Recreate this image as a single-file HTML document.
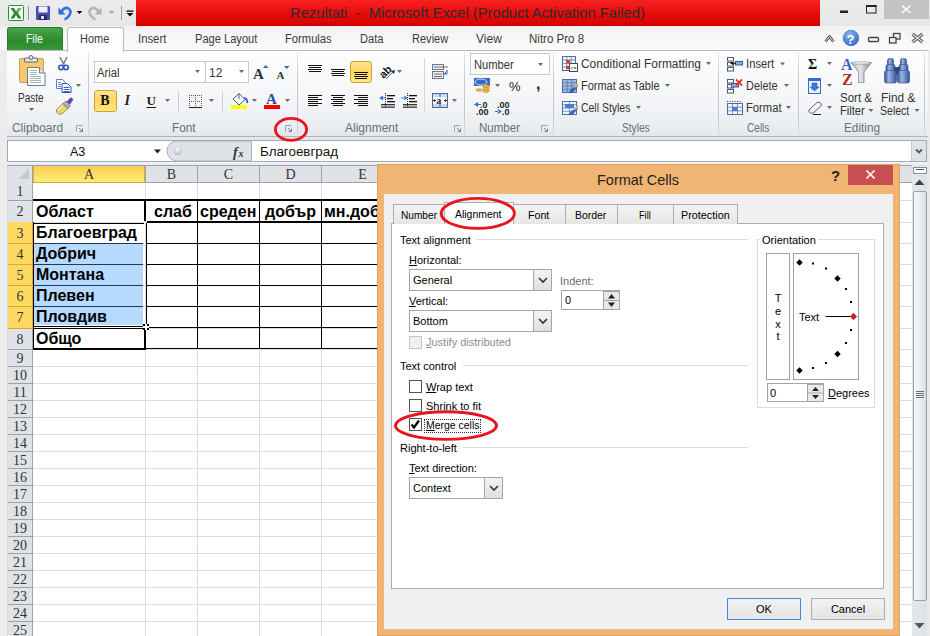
<!DOCTYPE html><html><head><meta charset="utf-8"><style>
*{margin:0;padding:0;box-sizing:border-box}
html,body{width:930px;height:636px;overflow:hidden}
body{position:relative;background:#ececec;font-family:"Liberation Sans",sans-serif;font-size:12px;color:#000}
.a{position:absolute}
.t{position:absolute;white-space:nowrap;line-height:1}
svg{position:absolute;overflow:visible}
.tab{position:absolute;top:33px;color:#3b3b3b;font-size:12px;white-space:nowrap;line-height:1}
.sep{position:absolute;top:52px;width:1px;height:83px;background:linear-gradient(#e6e9ed,#c5cad0 30%,#c5cad0 80%,#d8dce1)}
.glab{position:absolute;top:122px;color:#66707c;font-size:12px;white-space:nowrap;line-height:1}
.rl{position:absolute;color:#333;font-size:12px;white-space:nowrap;line-height:1}
.hdr{position:absolute;font-family:"Liberation Serif",serif;font-size:14px;color:#333;text-align:center;line-height:1}
.cell{position:absolute;font-weight:bold;font-size:16px;white-space:nowrap;line-height:1}
.dl{position:absolute;font-size:11px;color:#000;white-space:nowrap;line-height:1}
.cb{position:absolute;width:13px;height:13px;border:1px solid #555;background:#fff}
.combo{position:absolute;background:#fff;border:1px solid #a5a5a5}
.combo .btn{position:absolute;right:0;top:0;bottom:0;width:18px;background:linear-gradient(#f2f2f2,#e0e0e0);border-left:1px solid #a5a5a5}
</style></head><body>
<div class="a" style="left:0;top:0;width:930px;height:26px;background:linear-gradient(#ececec,#e6e6e6)"></div>
<div class="a" style="left:136px;top:0;width:684px;height:26px;background:linear-gradient(#f82222,#e80c0c 50%,#d60000)"></div>
<div class="t" style="left:290px;top:6px;font-size:14.8px;color:#2e2a2a;transform:scaleX(0.9968);transform-origin:0 0;">Rezultati &nbsp;- &nbsp;Microsoft Excel (Product Activation Failed)</div>
<div class="a" style="left:884px;top:0;width:45px;height:19px;background:#c3c3c3"></div>
<div class="a" style="left:0;top:26px;width:930px;height:24px;background:linear-gradient(#f1f1f1,#f8f8f8 60%,#fbfbfb)"></div>
<div class="a" style="left:7px;top:27px;width:56px;height:24px;background:linear-gradient(#47a447,#2b8a2b 60%,#3a9a3a);border:1px solid #2c7a2c;border-bottom:none;border-radius:3px 3px 0 0"></div>
<div class="t" style="left:26px;top:33px;font-size:12px;color:#fff;transform:scaleX(0.8637);transform-origin:0 0;">File</div>
<div class="a" style="left:67px;top:27px;width:57px;height:25px;background:linear-gradient(#ffffff,#fdfdfd);border:1px solid #b6bac0;border-bottom:none;border-radius:3px 3px 0 0;z-index:2"></div>
<div class="t" style="left:80px;top:33px;font-size:12px;color:#3b3b3b;z-index:3;transform:scaleX(0.9154);transform-origin:0 0;">Home</div>
<div class="t" style="left:138px;top:33px;font-size:12px;color:#3b3b3b;transform:scaleX(0.9429);transform-origin:0 0;">Insert</div>
<div class="t" style="left:195px;top:33px;font-size:12px;color:#3b3b3b;transform:scaleX(0.9245);transform-origin:0 0;">Page Layout</div>
<div class="t" style="left:285px;top:33px;font-size:12px;color:#3b3b3b;transform:scaleX(0.9338);transform-origin:0 0;">Formulas</div>
<div class="t" style="left:360px;top:33px;font-size:12px;color:#3b3b3b;transform:scaleX(0.9232);transform-origin:0 0;">Data</div>
<div class="t" style="left:412px;top:33px;font-size:12px;color:#3b3b3b;transform:scaleX(0.9201);transform-origin:0 0;">Review</div>
<div class="t" style="left:476px;top:33px;font-size:12px;color:#3b3b3b;transform:scaleX(1.0003);transform-origin:0 0;">View</div>
<div class="t" style="left:529px;top:33px;font-size:12px;color:#3b3b3b;transform:scaleX(0.9607);transform-origin:0 0;">Nitro Pro 8</div>
<svg style="left:0;top:0;z-index:5" width="930" height="50"><defs><radialGradient id="helpg" cx="0.4" cy="0.3" r="0.8"><stop offset="0" stop-color="#8ab8f0"/><stop offset="1" stop-color="#2a62c0"/></radialGradient></defs><rect x="8.5" y="5.5" width="15" height="15" rx="1" fill="#f4faf4" stroke="#2e8b3a"/><path d="M10.5 8 H14 L16 11.5 L18 8 H21.5 L18 13 L21.5 18.5 H18 L16 15 L14 18.5 H10.5 L14 13 Z" fill="#2a8a3a"/><path d="M16 11.5 L18 8 H21.5 L18 13 Z" fill="#6cc070"/><line x1="28.5" y1="6" x2="28.5" y2="20" stroke="#9a9a9a"/><rect x="36" y="6" width="14" height="14" rx="1" fill="#4c4cb8"/><rect x="38.5" y="6.5" width="9" height="6" fill="#f0f0ff"/><rect x="39" y="15" width="8" height="5" fill="#2a2a5a"/><rect x="41" y="16" width="3" height="3" fill="#dde"/><polygon points="58.5,7.5 58.5,14.5 65.5,14.5" fill="#2f6ad8"/><path d="M61.5 11.5 Q65 6.5 68.5 8.5 Q72 11 69.5 15 Q68 17.5 65.5 19" fill="none" stroke="#3274e0" stroke-width="2.6" stroke-linecap="round"/><polygon points="76.5,11 82.5,11 79.5,14" fill="#111"/><polygon points="101.5,7.5 101.5,14.5 94.5,14.5" fill="#b0b0b0"/><path d="M98.5 11.5 Q95 6.5 91.5 8.5 Q88 11 90.5 15 Q92 17.5 94.5 19" fill="none" stroke="#b4b4b4" stroke-width="2.6" stroke-linecap="round"/><polygon points="108.5,11 114.5,11 111.5,14" fill="#a8a8a8"/><line x1="121.5" y1="6" x2="121.5" y2="20" stroke="#9a9a9a"/><rect x="126.5" y="10.5" width="7" height="1.3" fill="#111"/><polygon points="126.5,13 133.5,13 130,16.5" fill="#111"/><rect x="840" y="10.5" width="8" height="2.5" fill="#222"/><rect x="866.5" y="5.5" width="9.5" height="7.5" fill="none" stroke="#222"/><rect x="866" y="5" width="10.5" height="2" fill="#222"/><path d="M902 5.5 L910.5 13 M910.5 5.5 L902 13" stroke="#fff" stroke-width="1.6"/><path d="M825.5 41.5 L829.5 36.5 L833.5 41.5" fill="none" stroke="#444" stroke-width="2.8" stroke-linejoin="round"/><path d="M825.5 41.5 L829.5 36.5 L833.5 41.5" fill="none" stroke="#fff" stroke-width="1" stroke-linejoin="round"/><circle cx="851" cy="38" r="7.8" fill="url(#helpg)" stroke="#3a6ab8" stroke-width="0.6"/><text x="846.6" y="43.5" font-family="Liberation Sans" font-weight="bold" font-size="13" fill="#fff">?</text><rect x="868.5" y="37.5" width="10" height="4" rx="1" fill="none" stroke="#444" stroke-width="1.3"/><rect x="893.5" y="33.5" width="6.5" height="5.5" fill="none" stroke="#444" stroke-width="1.3"/><rect x="889.5" y="37.5" width="6.5" height="5.5" fill="#f2f2f2" stroke="#444" stroke-width="1.3"/><path d="M912.5 34 L922.5 42 M922.5 34 L912.5 42" stroke="#444" stroke-width="3.2"/><path d="M912.5 34 L922.5 42 M922.5 34 L912.5 42" stroke="#f2f2f2" stroke-width="1.2"/></svg>
<div class="a" style="left:7px;top:50px;width:921px;height:87px;background:linear-gradient(#fdfdfe 0%,#f6f7f9 50%,#eceff2 85%,#e4e7eb 100%);border-top:1px solid #b6bac0;border-bottom:1px solid #b0b5bb"></div>
<div class="sep" style="left:88px"></div>
<div class="sep" style="left:297px"></div>
<div class="sep" style="left:464px"></div>
<div class="sep" style="left:553px"></div>
<div class="sep" style="left:718px"></div>
<div class="sep" style="left:798px"></div>
<div class="sep" style="left:924px"></div>
<div class="t" style="left:12px;top:122px;font-size:12px;color:#66707c;transform:scaleX(0.9930);transform-origin:0 0;">Clipboard</div>
<div class="t" style="left:172px;top:122px;font-size:12px;color:#66707c;transform:scaleX(0.9829);transform-origin:0 0;">Font</div>
<div class="t" style="left:345px;top:122px;font-size:12px;color:#66707c;transform:scaleX(0.9989);transform-origin:0 0;">Alignment</div>
<div class="t" style="left:479px;top:122px;font-size:12px;color:#66707c;transform:scaleX(0.9606);transform-origin:0 0;">Number</div>
<div class="t" style="left:622px;top:122px;font-size:12px;color:#66707c;transform:scaleX(0.8446);transform-origin:0 0;">Styles</div>
<div class="t" style="left:747px;top:122px;font-size:12px;color:#66707c;transform:scaleX(0.8399);transform-origin:0 0;">Cells</div>
<div class="t" style="left:844px;top:122px;font-size:12px;color:#66707c;transform:scaleX(0.9812);transform-origin:0 0;">Editing</div>
<svg style="left:0;top:0" width="930" height="140"><defs><linearGradient id="gold" x1="0" y1="0" x2="0" y2="1"><stop offset="0" stop-color="#fee390"/><stop offset="0.5" stop-color="#fdd660"/><stop offset="1" stop-color="#ffea7c"/></linearGradient><linearGradient id="funnel" x1="0" y1="0" x2="1" y2="0"><stop offset="0" stop-color="#a8acb2"/><stop offset="0.45" stop-color="#e6e8ea"/><stop offset="1" stop-color="#80868e"/></linearGradient><linearGradient id="bino" x1="0" y1="0" x2="1" y2="0"><stop offset="0" stop-color="#2e4e8e"/><stop offset="0.35" stop-color="#9ab4e4"/><stop offset="1" stop-color="#34549a"/></linearGradient></defs><rect x="19.5" y="58.5" width="24" height="24" rx="1.5" fill="#f6c96e" stroke="#c59d62"/><rect x="24.5" y="58" width="13" height="4" rx="1" fill="#e8eaec" stroke="#5a6470"/><circle cx="31" cy="57.5" r="2" fill="#e8eaec" stroke="#5a6470"/><path d="M27.5 67.5 H39.5 L45 73 V85.5 H27.5 Z" fill="#fbfcfd" stroke="#6b7b8e"/><path d="M39.5 67.5 V73 H45" fill="#dfe5ec" stroke="#6b7b8e"/><line x1="30" y1="70.5" x2="37" y2="70.5" stroke="#aab4c0" stroke-width="1"/><line x1="30" y1="72.5" x2="37" y2="72.5" stroke="#aab4c0" stroke-width="1"/><line x1="30" y1="74.5" x2="37" y2="74.5" stroke="#aab4c0" stroke-width="1"/><line x1="30" y1="76.5" x2="41" y2="76.5" stroke="#aab4c0" stroke-width="1"/><line x1="30" y1="78.5" x2="41" y2="78.5" stroke="#aab4c0" stroke-width="1"/><line x1="30" y1="80.5" x2="41" y2="80.5" stroke="#aab4c0" stroke-width="1"/><line x1="30" y1="82.5" x2="41" y2="82.5" stroke="#aab4c0" stroke-width="1"/><polygon points="29,108 34,108 31.5,111" fill="#666"/><path d="M60 57 L64 65 M67 57 L63 65" stroke="#7d848c" stroke-width="1.6"/><circle cx="61" cy="67.5" r="2.2" fill="none" stroke="#2d54b8" stroke-width="1.6"/><circle cx="66" cy="67.5" r="2.2" fill="none" stroke="#2d54b8" stroke-width="1.6"/><path d="M56.5 79.5 H62.5 L65.5 82.5 V88.5 H56.5 Z" fill="#fff" stroke="#5a7ec0"/><path d="M62 83.5 H67.5 L71 87 V92.5 H62 Z" fill="#fff" stroke="#2d54b8"/><line x1="58" y1="82.5" x2="61" y2="82.5" stroke="#6d8fd0"/><line x1="58" y1="84.5" x2="61" y2="84.5" stroke="#6d8fd0"/><line x1="58" y1="86.5" x2="61" y2="86.5" stroke="#6d8fd0"/><line x1="63.5" y1="87.5" x2="69.5" y2="87.5" stroke="#3a64c8"/><line x1="63.5" y1="89.5" x2="69.5" y2="89.5" stroke="#3a64c8"/><line x1="63.5" y1="91.5" x2="69.5" y2="91.5" stroke="#3a64c8"/><polygon points="76,84 81,84 78.5,87" fill="#666"/><path d="M56.5 109.5 L63 103.5 L68 108.5 L62 114 Q58 115 56.5 112 Z" fill="#e9d27a" stroke="#8c7b3c" stroke-width="0.8"/><path d="M58 110 L63 105.5" stroke="#f8eab0" stroke-width="1.2"/><path d="M63 103.5 L66 101 L70.5 105.5 L68 108.5 Z" fill="#b0b4ba" stroke="#62666c" stroke-width="0.7"/><path d="M67 101.5 L71 97.5 L73 99.5 L70 104 Z" fill="#5a4ab0" stroke="#3a2a80" stroke-width="0.5"/><path d="M76.5 131.5 V125.5 H82.5" fill="none" stroke="#9aa2ac"/><path d="M79 128 L82.5 131.5 M82.5 128.5 V131.5 H79.5" fill="none" stroke="#7a828c"/><path d="M285.5 131.5 V125.5 H291.5" fill="none" stroke="#9aa2ac"/><path d="M288 128 L291.5 131.5 M291.5 128.5 V131.5 H288.5" fill="none" stroke="#7a828c"/><path d="M454.5 131.5 V125.5 H460.5" fill="none" stroke="#9aa2ac"/><path d="M457 128 L460.5 131.5 M460.5 128.5 V131.5 H457.5" fill="none" stroke="#7a828c"/><path d="M541.5 131.5 V125.5 H547.5" fill="none" stroke="#9aa2ac"/><path d="M544 128 L547.5 131.5 M547.5 128.5 V131.5 H544.5" fill="none" stroke="#7a828c"/><rect x="94.5" y="61.5" width="111" height="21" fill="#fff" stroke="#c6cbd1"/><rect x="205.5" y="61.5" width="43" height="21" fill="#fff" stroke="#c6cbd1"/><polygon points="195,70 200,70 197.5,73" fill="#6a6a6a"/><polygon points="239,70 244,70 241.5,73" fill="#6a6a6a"/><text x="253" y="78.5" font-family="Liberation Serif" font-weight="bold" font-size="15" fill="#333">A</text><polygon points="263,68 268.5,68 265.75,65" fill="#3b68b8"/><text x="276.5" y="78.5" font-family="Liberation Serif" font-weight="bold" font-size="11" fill="#333">A</text><polygon points="284,66 289.5,66 286.75,69" fill="#3b68b8"/><rect x="94.5" y="90.5" width="22" height="21" rx="2.5" fill="url(#gold)" stroke="#cf9f3c"/><text x="100.2" y="105.3" font-family="Liberation Serif" font-weight="bold" font-size="14" fill="#111">B</text><text x="124.5" y="105.3" font-family="Liberation Serif" font-style="italic" font-weight="bold" font-size="14" fill="#222">I</text><text x="146.5" y="105" font-family="Liberation Serif" font-weight="bold" font-size="13" fill="#222">U</text><line x1="146.5" y1="107.5" x2="156" y2="107.5" stroke="#111" stroke-width="1"/><polygon points="165,99 170,99 167.5,102" fill="#6a6a6a"/><line x1="178.5" y1="91" x2="178.5" y2="112" stroke="#c9ced4"/><rect x="189" y="95" width="1" height="1" fill="#555"/><rect x="189" y="101" width="1" height="1" fill="#555"/><rect x="191" y="95" width="1" height="1" fill="#555"/><rect x="191" y="101" width="1" height="1" fill="#555"/><rect x="193" y="95" width="1" height="1" fill="#555"/><rect x="193" y="101" width="1" height="1" fill="#555"/><rect x="195" y="95" width="1" height="1" fill="#555"/><rect x="195" y="101" width="1" height="1" fill="#555"/><rect x="197" y="95" width="1" height="1" fill="#555"/><rect x="197" y="101" width="1" height="1" fill="#555"/><rect x="199" y="95" width="1" height="1" fill="#555"/><rect x="199" y="101" width="1" height="1" fill="#555"/><rect x="201" y="95" width="1" height="1" fill="#555"/><rect x="201" y="101" width="1" height="1" fill="#555"/><rect x="189" y="95" width="1" height="1" fill="#555"/><rect x="195" y="95" width="1" height="1" fill="#555"/><rect x="201" y="95" width="1" height="1" fill="#555"/><rect x="189" y="97" width="1" height="1" fill="#555"/><rect x="195" y="97" width="1" height="1" fill="#555"/><rect x="201" y="97" width="1" height="1" fill="#555"/><rect x="189" y="99" width="1" height="1" fill="#555"/><rect x="195" y="99" width="1" height="1" fill="#555"/><rect x="201" y="99" width="1" height="1" fill="#555"/><rect x="189" y="101" width="1" height="1" fill="#555"/><rect x="195" y="101" width="1" height="1" fill="#555"/><rect x="201" y="101" width="1" height="1" fill="#555"/><rect x="189" y="103" width="1" height="1" fill="#555"/><rect x="195" y="103" width="1" height="1" fill="#555"/><rect x="201" y="103" width="1" height="1" fill="#555"/><rect x="189" y="105" width="1" height="1" fill="#555"/><rect x="195" y="105" width="1" height="1" fill="#555"/><rect x="201" y="105" width="1" height="1" fill="#555"/><line x1="189" y1="107.5" x2="202" y2="107.5" stroke="#222"/><polygon points="209,99 214,99 211.5,102" fill="#6a6a6a"/><line x1="222.5" y1="91" x2="222.5" y2="112" stroke="#c9ced4"/><path d="M233 99 L239 93.5 L245 99.5 L239 105 Z" fill="#fff" stroke="#3a5a9a" stroke-width="1"/><path d="M239 93.5 V99" stroke="#4a5a6a"/><path d="M244 98 Q248 99 247 103" stroke="#3b6cc8" stroke-width="2" fill="none"/><rect x="231" y="105" width="16" height="4" fill="#ffff00"/><polygon points="252,99 257,99 254.5,102" fill="#6a6a6a"/><text x="266" y="104" font-family="Liberation Serif" font-weight="bold" font-size="15" fill="#2b4f9a">A</text><rect x="264" y="105" width="16" height="4" fill="#ff0000"/><polygon points="285,99 290,99 287.5,102" fill="#6a6a6a"/><rect x="308" y="65" width="14" height="1" fill="#111"/><rect x="309" y="67" width="12" height="1" fill="#111"/><rect x="308" y="69" width="14" height="1" fill="#111"/><rect x="309" y="71" width="12" height="1" fill="#111"/><rect x="331" y="69" width="14" height="1" fill="#111"/><rect x="332" y="71" width="12" height="1" fill="#111"/><rect x="331" y="73" width="14" height="1" fill="#111"/><rect x="332" y="75" width="12" height="1" fill="#111"/><rect x="350.5" y="61.5" width="21" height="21" rx="2.5" fill="url(#gold)" stroke="#cf9f3c"/><rect x="354" y="72" width="14" height="1" fill="#111"/><rect x="355" y="74" width="12" height="1" fill="#111"/><rect x="354" y="76" width="14" height="1" fill="#111"/><rect x="355" y="78" width="12" height="1" fill="#111"/><text x="0" y="0" transform="translate(383.5,79) rotate(-45)" font-family="Liberation Sans" font-weight="bold" font-size="11" fill="#111">ab</text><line x1="386" y1="79" x2="394" y2="71" stroke="#333" stroke-dasharray="1 0.5"/><polygon points="395,70 391,71 394,74" fill="#333"/><polygon points="397,70 402,70 399.5,73" fill="#6a6a6a"/><rect x="308" y="95" width="14" height="1" fill="#111"/><rect x="331" y="95" width="14" height="1" fill="#111"/><rect x="354" y="95" width="14" height="1" fill="#111"/><rect x="308" y="97" width="10" height="1" fill="#111"/><rect x="333" y="97" width="10" height="1" fill="#111"/><rect x="358" y="97" width="10" height="1" fill="#111"/><rect x="308" y="99" width="14" height="1" fill="#111"/><rect x="331" y="99" width="14" height="1" fill="#111"/><rect x="354" y="99" width="14" height="1" fill="#111"/><rect x="308" y="101" width="10" height="1" fill="#111"/><rect x="333" y="101" width="10" height="1" fill="#111"/><rect x="358" y="101" width="10" height="1" fill="#111"/><rect x="308" y="103" width="14" height="1" fill="#111"/><rect x="331" y="103" width="14" height="1" fill="#111"/><rect x="354" y="103" width="14" height="1" fill="#111"/><rect x="308" y="105" width="10" height="1" fill="#111"/><rect x="333" y="105" width="10" height="1" fill="#111"/><rect x="358" y="105" width="10" height="1" fill="#111"/><line x1="385.5" y1="93" x2="385.5" y2="108" stroke="#333" stroke-dasharray="1 1"/><rect x="387" y="95" width="8" height="1.3" fill="#111"/><rect x="387" y="98" width="6" height="1.3" fill="#111"/><rect x="387" y="101" width="8" height="1.3" fill="#111"/><rect x="381" y="104" width="14" height="1.3" fill="#333"/><rect x="381" y="106.5" width="14" height="1.3" fill="#333"/><path d="M379 98 L383 95.5 V100.5 Z M382 97.4 H386 V98.6 H382 Z" fill="#3b78d8"/><line x1="407.5" y1="93" x2="407.5" y2="108" stroke="#333" stroke-dasharray="1 1"/><rect x="409" y="95" width="8" height="1.3" fill="#111"/><rect x="409" y="98" width="6" height="1.3" fill="#111"/><rect x="409" y="101" width="8" height="1.3" fill="#111"/><rect x="403" y="104" width="14" height="1.3" fill="#333"/><rect x="403" y="106.5" width="14" height="1.3" fill="#333"/><path d="M408 98 L404 95.5 V100.5 Z M401 97.4 H405 V98.6 H401 Z" fill="#3b78d8"/><line x1="424.5" y1="58" x2="424.5" y2="112" stroke="#d2d6db"/><rect x="432.5" y="64.5" width="11" height="5" fill="#eef2f8" stroke="#5a7aa8"/><line x1="434" y1="67" x2="448" y2="67" stroke="#a0602a"/><rect x="432.5" y="71.5" width="11" height="7" fill="#eef2f8" stroke="#5a7aa8"/><line x1="434" y1="74" x2="442" y2="74" stroke="#a0602a"/><line x1="434" y1="76.5" x2="442" y2="76.5" stroke="#a0602a"/><path d="M447 70 V74 H444 M444 74 L447 71" stroke="#3b68b8" fill="none"/><rect x="432.5" y="93.5" width="15" height="14" fill="#c8d8ee" stroke="#4a6a9a"/><line x1="440" y1="93.5" x2="440" y2="97" stroke="#4a6a9a"/><line x1="440" y1="104" x2="440" y2="107.5" stroke="#4a6a9a"/><rect x="433" y="97" width="14" height="7" fill="#fff"/><text x="436.3" y="103.8" font-family="Liberation Serif" font-weight="bold" font-size="10" fill="#222">a</text><path d="M433 100.5 H436 M444 100.5 H447" stroke="#222"/><path d="M433 100.5 L435 99 V102 Z M447 100.5 L445 99 V102 Z" fill="#222"/><polygon points="452,99 457,99 454.5,102" fill="#6a6a6a"/><rect x="470.5" y="53.5" width="79" height="21" fill="#fff" stroke="#c6cbd1"/><polygon points="538,63 543,63 540.5,66" fill="#6a6a6a"/><rect x="474" y="78" width="16" height="8" fill="#3a66c4"/><ellipse cx="481" cy="82" rx="6" ry="3" fill="none" stroke="#cfe0ff"/><ellipse cx="486" cy="86" rx="3.5" ry="1.3" fill="#f0c040" stroke="#b08020" stroke-width="0.6"/><ellipse cx="486" cy="88.5" rx="3.5" ry="1.3" fill="#f0c040" stroke="#b08020" stroke-width="0.6"/><ellipse cx="486" cy="91" rx="3.5" ry="1.3" fill="#f0c040" stroke="#b08020" stroke-width="0.6"/><ellipse cx="479" cy="90" rx="3" ry="1.2" fill="#f0c040" stroke="#b08020" stroke-width="0.6"/><polygon points="495,84 500,84 497.5,87" fill="#6a6a6a"/><text x="509" y="91" font-family="Liberation Sans" font-size="13" fill="#222">%</text><text x="536" y="88.5" font-family="Liberation Sans" font-weight="bold" font-size="16" fill="#222">,</text><text x="480" y="108" font-family="Liberation Sans" font-weight="bold" font-size="9" fill="#222">.0</text><text x="476" y="115" font-family="Liberation Sans" font-weight="bold" font-size="9" fill="#222">.00</text><path d="M474 104.5 L478 102 V107 Z M477 104 H481 V105 H477 Z" fill="#3b68c8"/><text x="497" y="108" font-family="Liberation Sans" font-weight="bold" font-size="9" fill="#222">.00</text><text x="502" y="115" font-family="Liberation Sans" font-weight="bold" font-size="9" fill="#222">.0</text><path d="M502 111.5 L498 109 V114 Z M495 111 H499 V112 H495 Z" fill="#3b68c8" transform="translate(0,0)"/><rect x="562.5" y="56.5" width="13" height="14" fill="#f4f6fa" stroke="#4a6ea8"/><line x1="566.8333333333334" y1="56" x2="566.8333333333334" y2="71" stroke="#4a6ea8" stroke-width="0.7"/><line x1="571.1666666666666" y1="56" x2="571.1666666666666" y2="71" stroke="#4a6ea8" stroke-width="0.7"/><line x1="562" y1="60.0" x2="576" y2="60.0" stroke="#4a6ea8" stroke-width="0.7"/><line x1="562" y1="63.5" x2="576" y2="63.5" stroke="#4a6ea8" stroke-width="0.7"/><line x1="562" y1="67.0" x2="576" y2="67.0" stroke="#4a6ea8" stroke-width="0.7"/><rect x="566" y="60" width="4" height="3" fill="#e0402a"/><rect x="566" y="66" width="4" height="3" fill="#e0402a"/><rect x="569.5" y="63.5" width="8" height="8" fill="#fff" stroke="#3a4a5a"/><text x="570.5" y="70" font-family="Liberation Sans" font-size="5" fill="#222">&lt;=</text><rect x="562.5" y="79.5" width="14" height="13" fill="#9fb8e0" stroke="#4a6ea8"/><line x1="567.1666666666666" y1="79" x2="567.1666666666666" y2="93" stroke="#4a6ea8" stroke-width="0.7"/><line x1="571.8333333333334" y1="79" x2="571.8333333333334" y2="93" stroke="#4a6ea8" stroke-width="0.7"/><line x1="562" y1="82.75" x2="577" y2="82.75" stroke="#4a6ea8" stroke-width="0.7"/><line x1="562" y1="86.0" x2="577" y2="86.0" stroke="#4a6ea8" stroke-width="0.7"/><line x1="562" y1="89.25" x2="577" y2="89.25" stroke="#4a6ea8" stroke-width="0.7"/><path d="M569 93 Q571 88 574 88 L577 85 L578 86 L575 89 Q575 92 569 93 Z" fill="#3b68c8" stroke="#2a4a98" stroke-width="0.5"/><path d="M575 87 L578 84" stroke="#e8c040" stroke-width="2"/><rect x="562.5" y="101.5" width="14" height="13" fill="#f4f6fa" stroke="#4a6ea8"/><line x1="569.5" y1="101" x2="569.5" y2="115" stroke="#4a6ea8" stroke-width="0.7"/><line x1="562" y1="104.75" x2="577" y2="104.75" stroke="#4a6ea8" stroke-width="0.7"/><line x1="562" y1="108.0" x2="577" y2="108.0" stroke="#4a6ea8" stroke-width="0.7"/><line x1="562" y1="111.25" x2="577" y2="111.25" stroke="#4a6ea8" stroke-width="0.7"/><rect x="565" y="104" width="9" height="4" fill="#4a7ad8"/><path d="M569 115 Q571 110 574 110 L577 107 L578 108 L575 111 Q575 114 569 115 Z" fill="#3b68c8" stroke="#2a4a98" stroke-width="0.5"/><path d="M575 109 L578 106" stroke="#e8c040" stroke-width="2"/><polygon points="706,62 711,62 708.5,65" fill="#6a6a6a"/><polygon points="665,84 670,84 667.5,87" fill="#6a6a6a"/><polygon points="636,106 641,106 638.5,109" fill="#6a6a6a"/><rect x="727.5" y="57.5" width="6" height="3.5" fill="#fff" stroke="#4a5a6a"/><rect x="727.5" y="62.5" width="6" height="3.5" fill="#fff" stroke="#4a5a6a"/><rect x="727.5" y="67.5" width="6" height="3.5" fill="#fff" stroke="#4a5a6a"/><rect x="735.5" y="61.5" width="7" height="3.5" fill="#8ab0e8" stroke="#3a5a9a"/><path d="M730 63.3 L733 61.5 V65 Z" fill="#111"/><line x1="732" y1="63.3" x2="736" y2="63.3" stroke="#111"/><polygon points="780,62.5 785,62.5 782.5,65.5" fill="#6a6a6a"/><rect x="727.5" y="79.5" width="6" height="3.5" fill="#fff" stroke="#4a5a6a"/><rect x="727.5" y="84.5" width="6" height="3.5" fill="#fff" stroke="#4a5a6a"/><rect x="727.5" y="89.5" width="6" height="3.5" fill="#fff" stroke="#4a5a6a"/><rect x="731.5" y="83.5" width="7" height="3.5" fill="#8ab0e8" stroke="#3a5a9a"/><path d="M736 79.5 L742 85.5 M742 79.5 L736 85.5" stroke="#e8302a" stroke-width="1.8"/><polygon points="784,84 789,84 786.5,87" fill="#6a6a6a"/><rect x="727.5" y="103.5" width="15" height="11" fill="#f4f6fa" stroke="#4a6ea8"/><line x1="732.5" y1="103" x2="732.5" y2="115" stroke="#4a6ea8" stroke-width="0.7"/><line x1="737.5" y1="103" x2="737.5" y2="115" stroke="#4a6ea8" stroke-width="0.7"/><line x1="727" y1="107.16666666666667" x2="743" y2="107.16666666666667" stroke="#4a6ea8" stroke-width="0.7"/><line x1="727" y1="110.83333333333333" x2="743" y2="110.83333333333333" stroke="#4a6ea8" stroke-width="0.7"/><rect x="732" y="107" width="5" height="4" fill="#4a7ad8"/><path d="M727 101.5 H742" stroke="#333" stroke-dasharray="1 1.5"/><polygon points="786,106 791,106 788.5,109" fill="#6a6a6a"/><text x="808" y="69" font-family="Liberation Serif" font-weight="bold" font-size="14" fill="#111">&#931;</text><polygon points="827,62 832,62 829.5,65" fill="#6a6a6a"/><rect x="808.5" y="78.5" width="12" height="15" fill="#eaf2fc" stroke="#3a6ac8"/><rect x="809" y="79" width="11" height="2" fill="#3a6ac8"/><path d="M812 83 H817 V87 H819 L814.5 91 L810 87 H812 Z" fill="#3b78e0" stroke="#2a5ab8" stroke-width="0.6"/><polygon points="827,84 832,84 829.5,87" fill="#6a6a6a"/><path d="M809 110 L817 102.5 Q819.5 101.5 821 103.5 Q822 105 820.5 106.5 L813 113 Q810 114 809 112 Z" fill="#f6f8fa" stroke="#5a6270"/><line x1="813" y1="114.5" x2="821" y2="114.5" stroke="#222"/><polygon points="827,106 832,106 829.5,109" fill="#6a6a6a"/><text x="841" y="69.5" font-family="Liberation Serif" font-weight="bold" font-size="16" fill="#3a64b8">A</text><text x="842" y="85" font-family="Liberation Serif" font-weight="bold" font-size="16" fill="#a8302a">Z</text><path d="M851 62.5 H871.5 L864 72 V82.5 H858.5 V72 Z" fill="url(#funnel)" stroke="#7a7e84" stroke-width="0.7"/><ellipse cx="861.2" cy="63" rx="10" ry="1.3" fill="#e8eaec" stroke="#7a7e84" stroke-width="0.5"/><rect x="887.5" y="58.5" width="6" height="9" rx="2" fill="url(#bino)" stroke="#2a4a88" stroke-width="0.6"/><rect x="900.5" y="58.5" width="6" height="9" rx="2" fill="url(#bino)" stroke="#2a4a88" stroke-width="0.6"/><rect x="886" y="64.5" width="9" height="7" rx="1.5" fill="url(#bino)" stroke="#2a4a88" stroke-width="0.6"/><rect x="899" y="64.5" width="9" height="7" rx="1.5" fill="url(#bino)" stroke="#2a4a88" stroke-width="0.6"/><rect x="894" y="67" width="6" height="8" fill="#2a4a88"/><rect x="884.5" y="70.5" width="12" height="12.5" rx="2" fill="url(#bino)" stroke="#2a4a88" stroke-width="0.6"/><rect x="897.5" y="70.5" width="12" height="12.5" rx="2" fill="url(#bino)" stroke="#2a4a88" stroke-width="0.6"/><polygon points="868.5,109 873.5,109 871.0,112" fill="#6a6a6a"/><polygon points="914.5,109 919.5,109 917.0,112" fill="#6a6a6a"/></svg>
<div class="t" style="left:18px;top:92px;font-size:12px;color:#333;transform:scaleX(0.8375);transform-origin:0 0;">Paste</div>
<div class="t" style="left:97px;top:67px;font-size:12px;color:#333;transform:scaleX(0.9414);transform-origin:0 0;">Arial</div>
<div class="t" style="left:209px;top:67px;font-size:12px;color:#333;">12</div>
<div class="t" style="left:474px;top:59px;font-size:12px;color:#333;transform:scaleX(0.9302);transform-origin:0 0;">Number</div>
<div class="t" style="left:581px;top:58px;font-size:12px;color:#333;transform:scaleX(0.9940);transform-origin:0 0;">Conditional Formatting</div>
<div class="t" style="left:581px;top:80px;font-size:12px;color:#333;transform:scaleX(0.9148);transform-origin:0 0;">Format as Table</div>
<div class="t" style="left:581px;top:102px;font-size:12px;color:#333;transform:scaleX(0.8715);transform-origin:0 0;">Cell Styles</div>
<div class="t" style="left:746px;top:58px;font-size:12px;color:#333;transform:scaleX(0.9396);transform-origin:0 0;">Insert</div>
<div class="t" style="left:746px;top:80px;font-size:12px;color:#333;transform:scaleX(0.9139);transform-origin:0 0;">Delete</div>
<div class="t" style="left:746px;top:102px;font-size:12px;color:#333;transform:scaleX(0.9341);transform-origin:0 0;">Format</div>
<div class="t" style="left:840px;top:92px;font-size:12px;color:#333;transform:scaleX(0.9596);transform-origin:0 0;">Sort &amp;</div>
<div class="t" style="left:840px;top:105px;font-size:12px;color:#333;transform:scaleX(0.9263);transform-origin:0 0;">Filter</div>
<div class="t" style="left:881px;top:92px;font-size:12px;color:#333;transform:scaleX(0.9890);transform-origin:0 0;">Find &amp;</div>
<div class="t" style="left:880px;top:105px;font-size:12px;color:#333;transform:scaleX(0.8785);transform-origin:0 0;">Select</div>
<div class="a" style="left:7px;top:137px;width:921px;height:29px;background:#e3e7ec"></div>
<div class="a" style="left:7px;top:140px;width:920px;height:22px;background:#fff;border:1px solid #a3aab3"></div>
<div class="a" style="left:7px;top:162px;width:920px;height:3px;background:linear-gradient(#f4f6fb,#e3e8f4)"></div>
<div class="t" style="left:70px;top:146px;font-size:12.5px;color:#111">A3</div>
<svg style="left:0;top:130px" width="930" height="40"><polygon points="154,19.5 161,19.5 157.5,23.5" fill="#222"/><path d="M251.5 11 V31 H177 A10 10 0 0 1 177 11 Z" fill="#dfe3e8" stroke="#a9b0b8"/><circle cx="177.5" cy="21" r="4" fill="url(#pillg)"/><defs><radialGradient id="pillg" cx="0.5" cy="0.3" r="0.7"><stop offset="0" stop-color="#fafafa"/><stop offset="1" stop-color="#b8bcc2"/></radialGradient></defs><text x="233" y="26.5" font-family="Liberation Serif" font-style="italic" font-weight="bold" font-size="14" fill="#333">f</text><text x="238.5" y="26.5" font-family="Liberation Serif" font-style="italic" font-weight="bold" font-size="10" fill="#333">x</text><rect x="912" y="11" width="14" height="20" fill="#dfe3e8"/><line x1="911.5" y1="11" x2="911.5" y2="31" stroke="#c3c9d0"/><path d="M916 19.5 L919 22.5 L922 19.5" fill="none" stroke="#555" stroke-width="1.8"/></svg>
<div class="t" style="left:260px;top:146px;font-size:12.5px;color:#111;transform:scaleX(1.0701);transform-origin:0 0;">Благоевград</div>
<div class="a" style="left:7px;top:165px;width:905px;height:471px;background:#fff"></div>
<div class="a" style="left:7px;top:165px;width:905px;height:18px;background:#dfe3e8;border-top:1px solid #9ba3ad;border-bottom:1px solid #9ba3ad"></div>
<div class="a" style="left:7px;top:165px;width:26px;height:471px;background:#dfe3e8;border-right:1px solid #9ba3ad;border-left:1px solid #d6d9dd"></div>
<div class="a" style="left:7px;top:165px;width:905px;height:1px;background:#9ba3ad"></div>
<div class="a" style="left:33px;top:200px;width:879px;height:1px;background:#dadcdd"></div>
<div class="a" style="left:33px;top:222px;width:879px;height:1px;background:#dadcdd"></div>
<div class="a" style="left:33px;top:243px;width:879px;height:1px;background:#dadcdd"></div>
<div class="a" style="left:33px;top:264px;width:879px;height:1px;background:#dadcdd"></div>
<div class="a" style="left:33px;top:285px;width:879px;height:1px;background:#dadcdd"></div>
<div class="a" style="left:33px;top:306px;width:879px;height:1px;background:#dadcdd"></div>
<div class="a" style="left:33px;top:328px;width:879px;height:1px;background:#dadcdd"></div>
<div class="a" style="left:33px;top:349px;width:879px;height:1px;background:#dadcdd"></div>
<div class="a" style="left:33px;top:366px;width:879px;height:1px;background:#dadcdd"></div>
<div class="a" style="left:33px;top:383px;width:879px;height:1px;background:#dadcdd"></div>
<div class="a" style="left:33px;top:400px;width:879px;height:1px;background:#dadcdd"></div>
<div class="a" style="left:33px;top:417px;width:879px;height:1px;background:#dadcdd"></div>
<div class="a" style="left:33px;top:434px;width:879px;height:1px;background:#dadcdd"></div>
<div class="a" style="left:33px;top:451px;width:879px;height:1px;background:#dadcdd"></div>
<div class="a" style="left:33px;top:468px;width:879px;height:1px;background:#dadcdd"></div>
<div class="a" style="left:33px;top:485px;width:879px;height:1px;background:#dadcdd"></div>
<div class="a" style="left:33px;top:502px;width:879px;height:1px;background:#dadcdd"></div>
<div class="a" style="left:33px;top:519px;width:879px;height:1px;background:#dadcdd"></div>
<div class="a" style="left:33px;top:536px;width:879px;height:1px;background:#dadcdd"></div>
<div class="a" style="left:33px;top:553px;width:879px;height:1px;background:#dadcdd"></div>
<div class="a" style="left:33px;top:570px;width:879px;height:1px;background:#dadcdd"></div>
<div class="a" style="left:33px;top:587px;width:879px;height:1px;background:#dadcdd"></div>
<div class="a" style="left:33px;top:604px;width:879px;height:1px;background:#dadcdd"></div>
<div class="a" style="left:33px;top:621px;width:879px;height:1px;background:#dadcdd"></div>
<div class="a" style="left:33px;top:638px;width:879px;height:1px;background:#dadcdd"></div>
<div class="a" style="left:145px;top:183px;width:1px;height:453px;background:#dadcdd"></div>
<div class="a" style="left:197px;top:183px;width:1px;height:453px;background:#dadcdd"></div>
<div class="a" style="left:259px;top:183px;width:1px;height:453px;background:#dadcdd"></div>
<div class="a" style="left:321px;top:183px;width:1px;height:453px;background:#dadcdd"></div>
<div class="a" style="left:403px;top:183px;width:1px;height:453px;background:#dadcdd"></div>
<div class="a" style="left:480px;top:183px;width:1px;height:453px;background:#dadcdd"></div>
<div class="a" style="left:557px;top:183px;width:1px;height:453px;background:#dadcdd"></div>
<div class="a" style="left:634px;top:183px;width:1px;height:453px;background:#dadcdd"></div>
<div class="a" style="left:711px;top:183px;width:1px;height:453px;background:#dadcdd"></div>
<div class="a" style="left:788px;top:183px;width:1px;height:453px;background:#dadcdd"></div>
<div class="a" style="left:865px;top:183px;width:1px;height:453px;background:#dadcdd"></div>
<div class="a" style="left:942px;top:183px;width:1px;height:453px;background:#dadcdd"></div>
<div class="a" style="left:8px;top:200px;width:24px;height:1px;background:#9ba3ad"></div>
<div class="a" style="left:8px;top:222px;width:24px;height:1px;background:#9ba3ad"></div>
<div class="a" style="left:8px;top:243px;width:24px;height:1px;background:#9ba3ad"></div>
<div class="a" style="left:8px;top:264px;width:24px;height:1px;background:#9ba3ad"></div>
<div class="a" style="left:8px;top:285px;width:24px;height:1px;background:#9ba3ad"></div>
<div class="a" style="left:8px;top:306px;width:24px;height:1px;background:#9ba3ad"></div>
<div class="a" style="left:8px;top:328px;width:24px;height:1px;background:#9ba3ad"></div>
<div class="a" style="left:8px;top:349px;width:24px;height:1px;background:#9ba3ad"></div>
<div class="a" style="left:8px;top:366px;width:24px;height:1px;background:#9ba3ad"></div>
<div class="a" style="left:8px;top:383px;width:24px;height:1px;background:#9ba3ad"></div>
<div class="a" style="left:8px;top:400px;width:24px;height:1px;background:#9ba3ad"></div>
<div class="a" style="left:8px;top:417px;width:24px;height:1px;background:#9ba3ad"></div>
<div class="a" style="left:8px;top:434px;width:24px;height:1px;background:#9ba3ad"></div>
<div class="a" style="left:8px;top:451px;width:24px;height:1px;background:#9ba3ad"></div>
<div class="a" style="left:8px;top:468px;width:24px;height:1px;background:#9ba3ad"></div>
<div class="a" style="left:8px;top:485px;width:24px;height:1px;background:#9ba3ad"></div>
<div class="a" style="left:8px;top:502px;width:24px;height:1px;background:#9ba3ad"></div>
<div class="a" style="left:8px;top:519px;width:24px;height:1px;background:#9ba3ad"></div>
<div class="a" style="left:8px;top:536px;width:24px;height:1px;background:#9ba3ad"></div>
<div class="a" style="left:8px;top:553px;width:24px;height:1px;background:#9ba3ad"></div>
<div class="a" style="left:8px;top:570px;width:24px;height:1px;background:#9ba3ad"></div>
<div class="a" style="left:8px;top:587px;width:24px;height:1px;background:#9ba3ad"></div>
<div class="a" style="left:8px;top:604px;width:24px;height:1px;background:#9ba3ad"></div>
<div class="a" style="left:8px;top:621px;width:24px;height:1px;background:#9ba3ad"></div>
<div class="a" style="left:8px;top:638px;width:24px;height:1px;background:#9ba3ad"></div>
<div class="a" style="left:145px;top:166px;width:1px;height:16px;background:#9ba3ad"></div>
<div class="a" style="left:197px;top:166px;width:1px;height:16px;background:#9ba3ad"></div>
<div class="a" style="left:259px;top:166px;width:1px;height:16px;background:#9ba3ad"></div>
<div class="a" style="left:321px;top:166px;width:1px;height:16px;background:#9ba3ad"></div>
<div class="a" style="left:403px;top:166px;width:1px;height:16px;background:#9ba3ad"></div>
<div class="a" style="left:480px;top:166px;width:1px;height:16px;background:#9ba3ad"></div>
<div class="a" style="left:557px;top:166px;width:1px;height:16px;background:#9ba3ad"></div>
<div class="a" style="left:634px;top:166px;width:1px;height:16px;background:#9ba3ad"></div>
<div class="a" style="left:711px;top:166px;width:1px;height:16px;background:#9ba3ad"></div>
<div class="a" style="left:788px;top:166px;width:1px;height:16px;background:#9ba3ad"></div>
<div class="a" style="left:865px;top:166px;width:1px;height:16px;background:#9ba3ad"></div>
<div class="a" style="left:942px;top:166px;width:1px;height:16px;background:#9ba3ad"></div>
<div class="a" style="left:33px;top:166px;width:112px;height:17px;background:linear-gradient(#fdcd58,#ffed73);border-bottom:1px solid #e1a43f;border-left:1px solid #e1a43f;border-right:1px solid #e1a43f"></div>
<div class="a" style="left:8px;top:222px;width:25px;height:107px;background:#fed962;border-right:1px solid #e1a43f"></div>
<div class="a" style="left:8px;top:243px;width:24px;height:1px;background:#e1a43f"></div>
<div class="a" style="left:8px;top:264px;width:24px;height:1px;background:#e1a43f"></div>
<div class="a" style="left:8px;top:285px;width:24px;height:1px;background:#e1a43f"></div>
<div class="a" style="left:8px;top:306px;width:24px;height:1px;background:#e1a43f"></div>
<div class="a" style="left:8px;top:328px;width:24px;height:1px;background:#e1a43f"></div>
<svg style="left:18px;top:169px" width="12" height="11"><polygon points="11,0 11,10 1,10" fill="#c3c8cd"/></svg>
<div class="hdr" style="left:33px;top:168px;width:112px">A</div>
<div class="hdr" style="left:146px;top:168px;width:51px">B</div>
<div class="hdr" style="left:198px;top:168px;width:61px">C</div>
<div class="hdr" style="left:260px;top:168px;width:61px">D</div>
<div class="hdr" style="left:322px;top:168px;width:81px">E</div>
<div class="hdr" style="left:8px;top:185px;width:24px">1</div>
<div class="hdr" style="left:8px;top:205px;width:24px">2</div>
<div class="hdr" style="left:8px;top:227px;width:24px">3</div>
<div class="hdr" style="left:8px;top:248px;width:24px">4</div>
<div class="hdr" style="left:8px;top:269px;width:24px">5</div>
<div class="hdr" style="left:8px;top:290px;width:24px">6</div>
<div class="hdr" style="left:8px;top:311px;width:24px">7</div>
<div class="hdr" style="left:8px;top:333px;width:24px">8</div>
<div class="hdr" style="left:8px;top:352px;width:24px">9</div>
<div class="hdr" style="left:8px;top:369px;width:24px">10</div>
<div class="hdr" style="left:8px;top:386px;width:24px">11</div>
<div class="hdr" style="left:8px;top:403px;width:24px">12</div>
<div class="hdr" style="left:8px;top:420px;width:24px">13</div>
<div class="hdr" style="left:8px;top:437px;width:24px">14</div>
<div class="hdr" style="left:8px;top:454px;width:24px">15</div>
<div class="hdr" style="left:8px;top:471px;width:24px">16</div>
<div class="hdr" style="left:8px;top:488px;width:24px">17</div>
<div class="hdr" style="left:8px;top:505px;width:24px">18</div>
<div class="hdr" style="left:8px;top:522px;width:24px">19</div>
<div class="hdr" style="left:8px;top:539px;width:24px">20</div>
<div class="hdr" style="left:8px;top:556px;width:24px">21</div>
<div class="hdr" style="left:8px;top:573px;width:24px">22</div>
<div class="hdr" style="left:8px;top:590px;width:24px">23</div>
<div class="hdr" style="left:8px;top:607px;width:24px">24</div>
<div class="hdr" style="left:8px;top:624px;width:24px">25</div>
<div class="a" style="left:34px;top:244px;width:109px;height:81px;background:#b7daff"></div>
<div class="cell" style="left:36px;top:204px">Област</div>
<div class="cell" style="left:154px;top:204px">слаб</div>
<div class="cell" style="left:200px;top:204px">среден</div>
<div class="cell" style="left:265px;top:204px">добър</div>
<div class="cell" style="left:324px;top:204px">мн.добър</div>
<div class="cell" style="left:36px;top:225px">Благоевград</div>
<div class="cell" style="left:36px;top:246px">Добрич</div>
<div class="cell" style="left:36px;top:267px">Монтана</div>
<div class="cell" style="left:36px;top:288px">Плевен</div>
<div class="cell" style="left:36px;top:309px">Пловдив</div>
<div class="cell" style="left:36px;top:331px">Общо</div>
<div class="a" style="left:33px;top:199px;width:350px;height:2px;background:#000"></div>
<div class="a" style="left:144px;top:200px;width:2px;height:21px;background:#000"></div>
<div class="a" style="left:147px;top:221px;width:236px;height:2px;background:#000"></div>
<div class="a" style="left:33px;top:223px;width:111px;height:1px;background:#000"></div>
<div class="a" style="left:146px;top:223px;width:1px;height:102px;background:#000"></div>
<div class="a" style="left:147px;top:243px;width:236px;height:1px;background:#000"></div>
<div class="a" style="left:34px;top:243px;width:109px;height:1px;background:#1f3a5a"></div>
<div class="a" style="left:147px;top:264px;width:236px;height:1px;background:#000"></div>
<div class="a" style="left:34px;top:264px;width:109px;height:1px;background:#1f3a5a"></div>
<div class="a" style="left:147px;top:285px;width:236px;height:1px;background:#000"></div>
<div class="a" style="left:34px;top:285px;width:109px;height:1px;background:#1f3a5a"></div>
<div class="a" style="left:147px;top:306px;width:236px;height:1px;background:#000"></div>
<div class="a" style="left:34px;top:306px;width:109px;height:1px;background:#1f3a5a"></div>
<div class="a" style="left:197px;top:200px;width:1px;height:149px;background:#000"></div>
<div class="a" style="left:259px;top:200px;width:1px;height:149px;background:#000"></div>
<div class="a" style="left:321px;top:200px;width:1px;height:149px;background:#000"></div>
<div class="a" style="left:33px;top:326px;width:110px;height:1px;background:#000"></div>
<div class="a" style="left:33px;top:328px;width:110px;height:1px;background:#000"></div>
<div class="a" style="left:148px;top:327px;width:235px;height:1px;background:#000"></div>
<div class="a" style="left:144px;top:330px;width:2px;height:19px;background:#000"></div>
<div class="a" style="left:33px;top:348px;width:113px;height:2px;background:#000"></div>
<div class="a" style="left:146px;top:348px;width:237px;height:1px;background:#000"></div>
<div class="a" style="left:33px;top:222px;width:1px;height:127px;background:#000"></div>
<div class="a" style="left:143px;top:324px;width:6px;height:6px;background:#000"></div>
<div class="a" style="left:145px;top:324px;width:2px;height:6px;background:#fff"></div>
<div class="a" style="left:143px;top:326px;width:6px;height:2px;background:#fff"></div>
<div class="a" style="left:912px;top:165px;width:15px;height:471px;background:linear-gradient(90deg,#e3e7ec,#dde2e7)"></div>
<div class="a" style="left:927px;top:137px;width:3px;height:499px;background:#e8e8e8"></div>
<div class="a" style="left:913px;top:167px;width:14px;height:7px;background:#fff;border:1px solid #8a9098"></div>
<div class="a" style="left:916px;top:169px;width:8px;height:1px;background:#555"></div>
<svg style="left:0;top:0" width="930" height="636"><polygon points="914.5,185 924.5,185 919.5,179.5" fill="#444"/><polygon points="914.5,623 924.5,623 919.5,628.5" fill="#555"/></svg>
<div class="a" style="left:913px;top:191px;width:14px;height:410px;background:linear-gradient(90deg,#f7f8fa,#e6e9ed 70%,#d8dce2);border:1px solid #9aa2ac;border-radius:2px;z-index:0"></div>
<svg style="left:0;top:0" width="930" height="636"><line x1="916" y1="391.5" x2="924" y2="391.5" stroke="#6a6e74"/><line x1="916" y1="393.5" x2="924" y2="393.5" stroke="#6a6e74"/><line x1="916" y1="395.5" x2="924" y2="395.5" stroke="#6a6e74"/><line x1="916" y1="397.5" x2="924" y2="397.5" stroke="#6a6e74"/></svg>
<div class="a" style="left:377px;top:164px;width:523px;height:472px;background:#f1b573;border:1px solid #e2a560"></div>
<div class="a" style="left:384px;top:194px;width:509px;height:435px;background:#f0f0f0"></div>
<div class="a" style="left:848px;top:165px;width:45px;height:20px;background:#c74f4f"></div>
<svg style="left:0;top:0" width="930" height="636"><path d="M866.5 170.5 L874.5 178.5 M874.5 170.5 L866.5 178.5" stroke="#fff" stroke-width="1.7"/></svg>
<div class="t" style="left:831px;top:168px;font-size:15px;font-weight:bold;color:#222">?</div>
<div class="t" style="left:597px;top:172px;font-size:15px;color:#222;transform:scaleX(0.9646);transform-origin:0 0;">Format Cells</div>
<div class="a" style="left:391px;top:223px;width:493px;height:366px;background:#fff;border:1px solid #adadad"></div>
<div class="a" style="left:393px;top:204px;width:52px;height:20px;background:linear-gradient(#f3f3f3,#e6e6e6);border:1px solid #adadad;border-bottom:none"></div>
<div class="t" style="left:400.5px;top:210px;font-size:11px;color:#000;transform:scaleX(0.9202);transform-origin:0 0;">Number</div>
<div class="a" style="left:513px;top:204px;width:53px;height:20px;background:linear-gradient(#f3f3f3,#e6e6e6);border:1px solid #adadad;border-bottom:none"></div>
<div class="t" style="left:528.4px;top:210px;font-size:11px;color:#000;transform:scaleX(0.9678);transform-origin:0 0;">Font</div>
<div class="a" style="left:565px;top:204px;width:53px;height:20px;background:linear-gradient(#f3f3f3,#e6e6e6);border:1px solid #adadad;border-bottom:none"></div>
<div class="t" style="left:575.4px;top:210px;font-size:11px;color:#000;transform:scaleX(0.9481);transform-origin:0 0;">Border</div>
<div class="a" style="left:617px;top:204px;width:57px;height:20px;background:linear-gradient(#f3f3f3,#e6e6e6);border:1px solid #adadad;border-bottom:none"></div>
<div class="t" style="left:639.1px;top:210px;font-size:11px;color:#000;transform:scaleX(0.8327);transform-origin:0 0;">Fill</div>
<div class="a" style="left:673px;top:204px;width:65px;height:20px;background:linear-gradient(#f3f3f3,#e6e6e6);border:1px solid #adadad;border-bottom:none"></div>
<div class="t" style="left:680.6px;top:210px;font-size:11px;color:#000;transform:scaleX(0.9833);transform-origin:0 0;">Protection</div>
<div class="a" style="left:444px;top:202px;width:70px;height:22px;background:#fff;border:1px solid #adadad;border-bottom:none"></div>
<div class="t" style="left:455px;top:209px;font-size:11px;color:#000;transform:scaleX(0.9507);transform-origin:0 0;">Alignment</div>
<div class="dl" style="left:400px;top:235px">Text alignment</div>
<div class="a" style="left:476px;top:239px;width:272px;height:1px;background:#dcdcdc"></div>
<div class="dl" style="left:409px;top:255px"><u>H</u>orizontal:</div>
<div class="combo" style="left:409px;top:269px;width:143px;height:22px"><div class="btn"></div></div>
<div class="dl" style="left:413px;top:275px">General</div>
<div class="dl" style="left:560px;top:276px;color:#6d6d6d">Indent:</div>
<div class="a" style="left:561px;top:290px;width:59px;height:20px;background:#fff;border:1px solid #a5a5a5"></div>
<div class="dl" style="left:565px;top:295px">0</div>
<div class="dl" style="left:409px;top:296px"><u>V</u>ertical:</div>
<div class="combo" style="left:409px;top:310px;width:143px;height:22px"><div class="btn"></div></div>
<div class="dl" style="left:413px;top:316px">Bottom</div>
<div class="a" style="left:409px;top:336px;width:13px;height:13px;background:#f0f0f0;border:1px solid #c5c5c5"></div>
<div class="dl" style="left:426px;top:337px;color:#8d8d8d"><u>J</u>ustify distributed</div>
<div class="dl" style="left:400px;top:361px">Text control</div>
<div class="a" style="left:463px;top:365px;width:285px;height:1px;background:#dcdcdc"></div>
<div class="cb" style="left:409px;top:380px"></div><div class="dl" style="left:426px;top:382px"><u>W</u>rap text</div>
<div class="cb" style="left:409px;top:399px"></div><div class="dl" style="left:426px;top:401px">S<u>h</u>rink to fit</div>
<div class="cb" style="left:409px;top:418px"></div><div class="dl" style="left:426px;top:420px;transform:scaleX(0.95);transform-origin:0 0"><u>M</u>erge cells</div>
<div class="a" style="left:424px;top:419px;width:57px;height:14px;border:1px dotted #333"></div>
<div class="dl" style="left:400px;top:443px">Right-to-left</div>
<div class="a" style="left:463px;top:447px;width:285px;height:1px;background:#dcdcdc"></div>
<div class="dl" style="left:409px;top:463px"><u>T</u>ext direction:</div>
<div class="combo" style="left:409px;top:477px;width:94px;height:22px"><div class="btn"></div></div>
<div class="dl" style="left:413px;top:483px">Context</div>
<div class="a" style="left:757px;top:239px;width:118px;height:169px;border:1px solid #dcdcdc"></div>
<div class="a" style="left:760px;top:233px;width:58px;height:12px;background:#fff"></div>
<div class="dl" style="left:762px;top:235px">Orientation</div>
<div class="a" style="left:766px;top:253px;width:24px;height:127px;border:1px solid #a0a0a0;background:#fff"></div>
<div class="a" style="left:793px;top:253px;width:66px;height:127px;border:1px solid #a0a0a0;background:#fff"></div>
<div class="dl" style="left:770px;top:293px;width:16px;text-align:center">T</div>
<div class="dl" style="left:770px;top:306px;width:16px;text-align:center">e</div>
<div class="dl" style="left:770px;top:319px;width:16px;text-align:center">x</div>
<div class="dl" style="left:770px;top:331px;width:16px;text-align:center">t</div>
<div class="dl" style="left:799px;top:312px">Text</div>
<div class="a" style="left:767px;top:383px;width:57px;height:19px;background:#fff;border:1px solid #a5a5a5"></div>
<div class="dl" style="left:770px;top:388px">0</div>
<div class="dl" style="left:828px;top:388px"><u>D</u>egrees</div>
<svg style="left:0;top:0;z-index:3" width="930" height="636"><polygon points="799.5,259.3 802.7,262.5 799.5,265.7 796.3,262.5" fill="#000"/><rect x="812" y="262.5" width="2" height="2" fill="#000"/><rect x="825" y="267.5" width="2" height="2" fill="#000"/><polygon points="837.5,275.3 840.7,278.5 837.5,281.7 834.3,278.5" fill="#000"/><rect x="845" y="288" width="2" height="2" fill="#000"/><rect x="850" y="301" width="2" height="2" fill="#000"/><polygon points="853.5,313.3 856.7,316.5 853.5,319.7 850.3,316.5" fill="#e02020"/><polygon points="853.5,313.3 856.7,316.5 853.5,319.7 850.3,316.5" fill="none" stroke="#600" stroke-width="0.6"/><line x1="825.5" y1="316.5" x2="850" y2="316.5" stroke="#000"/><rect x="850" y="329" width="2" height="2" fill="#000"/><rect x="845" y="342" width="2" height="2" fill="#000"/><polygon points="837.5,350.8 840.7,354 837.5,357.2 834.3,354" fill="#000"/><rect x="825" y="362" width="2" height="2" fill="#000"/><rect x="812" y="367" width="2" height="2" fill="#000"/><polygon points="799.5,367.3 802.7,370.5 799.5,373.7 796.3,370.5" fill="#000"/><rect x="603.5" y="291.5" width="16" height="18" fill="#e8e8e8" stroke="#a5a5a5"/><line x1="603" y1="300.5" x2="619" y2="300.5" stroke="#a5a5a5"/><polygon points="608,298.5 615,298.5 611.5,294" fill="#222"/><polygon points="608,302.5 615,302.5 611.5,307" fill="#222"/><rect x="807.5" y="384.5" width="16" height="17" fill="#e8e8e8" stroke="#a5a5a5"/><line x1="807" y1="393.0" x2="823" y2="393.0" stroke="#a5a5a5"/><polygon points="812,391.0 819,391.0 815.5,387" fill="#222"/><polygon points="812,395.0 819,395.0 815.5,399" fill="#222"/><path d="M539 278 L543 282 L547 278" fill="none" stroke="#333" stroke-width="1.6"/><path d="M539 319 L543 323 L547 319" fill="none" stroke="#333" stroke-width="1.6"/><path d="M490 486 L494 490 L498 486" fill="none" stroke="#333" stroke-width="1.6"/><path d="M411.5 424.5 L414 427.5 L419 420.5" fill="none" stroke="#000" stroke-width="2.2"/><ellipse cx="477.8" cy="213.4" rx="36.6" ry="15" fill="none" stroke="#e8141e" stroke-width="2.9"/><ellipse cx="446" cy="425.6" rx="50.5" ry="13.8" fill="none" stroke="#e8141e" stroke-width="2.9"/></svg>
<div class="a" style="left:727px;top:598px;width:74px;height:22px;background:linear-gradient(#f2f2f2,#e4e4e4);border:1px solid #3c8fe0"></div>
<div class="dl" style="left:727px;top:604px;width:74px;text-align:center">OK</div>
<div class="a" style="left:811px;top:598px;width:74px;height:22px;background:linear-gradient(#f2f2f2,#e4e4e4);border:1px solid #adadad"></div>
<div class="dl" style="left:811px;top:604px;width:74px;text-align:center">Cancel</div>
<svg style="left:0;top:0;z-index:10" width="930" height="150"><ellipse cx="291" cy="129.4" rx="15.6" ry="11" fill="none" stroke="#e8141e" stroke-width="2.8"/></svg>
</body></html>
